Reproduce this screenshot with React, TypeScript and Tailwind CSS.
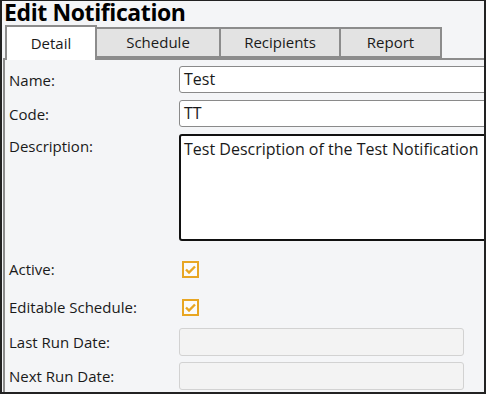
import React from 'react';

const tabs = ['Detail', 'Schedule', 'Recipients', 'Report'];
const tabWidths = ['w-[92px]', 'w-[124px]', 'w-[120px]', 'w-[101px]'];

const Check: React.FC = () => (
  <div className="w-[17px] h-[17px] border-2 border-[#e8a623] bg-[#fbfbfb] flex items-center justify-center">
    <svg width="11" height="9" viewBox="0 0 11 9">
      <path d="M1 4.5 L4 7.5 L10 1.5" stroke="#e8a623" strokeWidth="2.4" fill="none" />
    </svg>
  </div>
);

const App: React.FC = () => {
  return (
    <div
      className="w-[486px] h-[394px] overflow-hidden bg-[#f4f5f7] border-l-2 border-t border-r-2 border-b-2 border-[#222] flex flex-col text-[#1a1a1a]"
      style={{ fontFamily: '"Open Sans", "Noto Sans", sans-serif' }}
    >
      <div className="pl-[2px] h-[22px] shrink-0 leading-[22px] text-[23px] tracking-[-0.4px] font-bold text-black">
        Edit Notification
      </div>

      <div className="flex items-end pl-[3px] h-[35px] shrink-0">
        {tabs.map((t, i) =>
          i === 0 ? (
            <div
              key={t}
              className={`${tabWidths[i]} h-[35px] bg-white border-2 border-b-0 border-[#8c8c8c] flex items-center justify-center text-[15px] relative z-10 -mb-[2px]`}
            >
              {t}
            </div>
          ) : (
            <div
              key={t}
              className={`${tabWidths[i]} h-[31px] bg-[#e3e3e3] border-2 border-l-0 border-[#8c8c8c] flex items-center justify-center text-[15px]`}
            >
              {t}
            </div>
          )
        )}
      </div>

      <div className="flex-1 ml-[1px] border-l-2 border-t-2 border-[#8c8c8c] pl-[4px] pt-[6px] text-[15px] leading-[20px]">
        <div className="grid grid-cols-[170px_320px] gap-y-[7px] items-center">
          <div>Name:</div>
          <div className="h-[27px] bg-white border border-[#8a8a8a] rounded-[3px] pl-[4px] leading-[25px] text-[16px]">Test</div>

          <div>Code:</div>
          <div className="h-[27px] bg-white border border-[#8a8a8a] rounded-[3px] pl-[4px] leading-[25px] text-[16px]">TT</div>

          <div className="self-start pt-[2px]">Description:</div>
          <div className="h-[107px] bg-white border-2 border-[#111] rounded-[3px] pl-[3px] pt-[1px] text-[16px] leading-[24px]">
            Test Description of the Test Notification
          </div>
        </div>

        <div className="grid grid-cols-[173px_300px] items-center mt-[18px] gap-y-[18px]">
          <div>Active:</div>
          <Check />
          <div>Editable Schedule:</div>
          <Check />
        </div>

        <div className="grid grid-cols-[170px_285px] items-center mt-[11px] gap-y-[6px]">
          <div>Last Run Date:</div>
          <div className="h-[28px] bg-[#f3f3f3] border border-[#d2d2d2] rounded-[3px]" />
          <div>Next Run Date:</div>
          <div className="h-[28px] bg-[#f3f3f3] border border-[#d2d2d2] rounded-[3px]" />
        </div>
      </div>
    </div>
  );
};

export default App;
